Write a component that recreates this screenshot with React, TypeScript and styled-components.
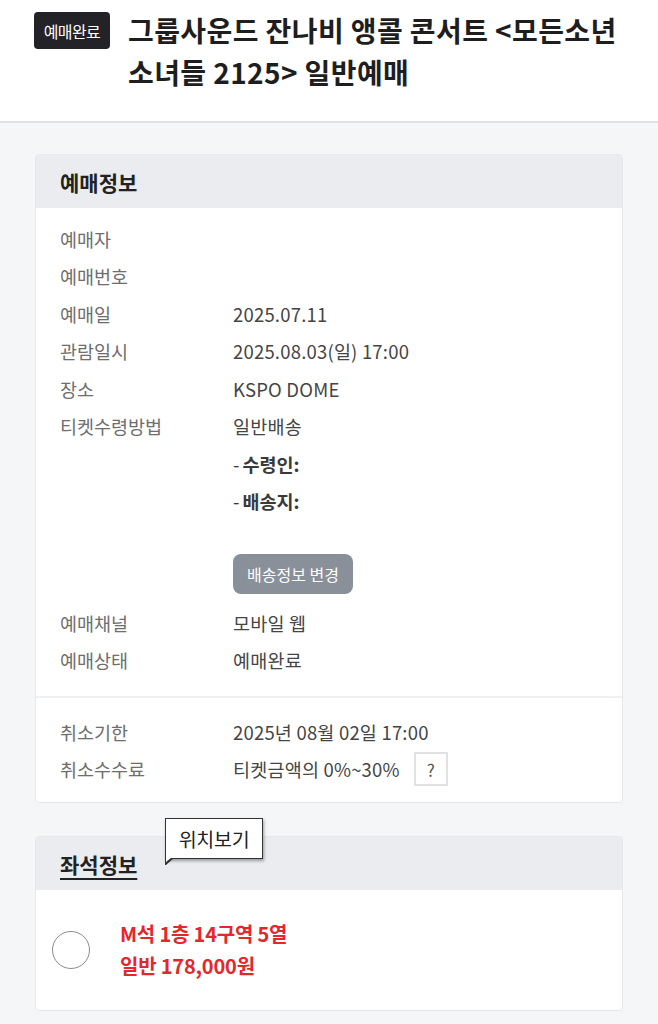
import React from "react";
import styled, { createGlobalStyle } from "styled-components";

const Global = createGlobalStyle`
  html, body { margin: 0; padding: 0; background: #f4f6f8; }
  body { font-family: "Noto Sans CJK KR", "Noto Sans", sans-serif; -webkit-font-smoothing: antialiased; }
  * { box-sizing: border-box; }
`;

const Page = styled.div`
  width: 658px;
  min-height: 1024px;
  background: #f4f6f8;
`;

const Header = styled.header`
  background: #fff;
  height: 123px;
  border-bottom: 2px solid #dfe1e4;
  display: flex;
  align-items: flex-start;
  padding: 12px 20px 0 34px;
  gap: 18px;
`;

const Badge = styled.span`
  flex: none;
  background: #232327;
  color: #fff;
  font-size: 16px;
  border-radius: 4px;
  height: 37px;
  width: 76px;
  display: flex;
  align-items: center;
  justify-content: center;
  letter-spacing: -0.6px;
`;

const Title = styled.h1`
  margin: -3px 0 0;
  font-size: 28px;
  font-weight: 700;
  line-height: 42px;
  color: #1e1e1e;
  letter-spacing: 0.4px;
`;

const Content = styled.main`
  padding: 31px 35px 0;
  display: flex;
  flex-direction: column;
  gap: 33px;
`;

const Card = styled.section`
  background: #fff;
  border: 1px solid #e6e8eb;
  border-radius: 4px;
  position: relative;
`;

const CardHead = styled.div`
  height: 53px;
  background: #ebecf0;
  display: flex;
  align-items: center;
  padding-left: 24px;
`;

const CardTitle = styled.h2<{ $underline?: boolean }>`
  margin: 0;
  font-size: 21px;
  font-weight: 700;
  color: #222;
  text-decoration: ${(p) => (p.$underline ? "underline" : "none")};
  text-underline-offset: 5px;
  text-decoration-thickness: 2px;
`;

const Block = styled.div<{ $pt: number; $pb: number; $divider?: boolean }>`
  padding: ${(p) => p.$pt}px 24px ${(p) => p.$pb}px;
  border-top: ${(p) => (p.$divider ? "2px solid #eef0f2" : "none")};
  display: flex;
  flex-direction: column;
`;

const Row = styled.div`
  display: grid;
  grid-template-columns: 173px 1fr;
  align-items: center;
  min-height: 37.5px;
  font-size: 18.5px;
  letter-spacing: 0;
`;

const Label = styled.span`
  color: #6e6e6e;
`;

const Value = styled.span`
  color: #454545;
  display: flex;
  align-items: center;
  gap: 14px;
  letter-spacing: 0.2px;
`;

const SubLine = styled.div`
  margin-left: 173px;
  min-height: 37.5px;
  display: flex;
  align-items: center;
  font-size: 18.5px;
  font-weight: 700;
  color: #3a3a3a;
`;

const Dash = styled.span`
  font-weight: 400;
  margin-right: 3px;
`;

const ChangeButton = styled.button`
  margin: 34px 0 10px 173px;
  width: 120px;
  height: 40px;
  border: none;
  border-radius: 8px;
  background: #8a9099;
  color: #fff;
  font-family: inherit;
  font-size: 16px;
  letter-spacing: 0;
  padding: 0;
`;

const HelpBox = styled.span`
  width: 34px;
  height: 34px;
  border: 2px solid #e2e2e2;
  display: inline-flex;
  align-items: center;
  justify-content: center;
  color: #555;
  font-size: 17px;
`;

const Tooltip = styled.div`
  position: absolute;
  left: 129px;
  top: -19px;
  background: #fff;
  border: 1px solid #333;
  box-shadow: 1px 2px 3px rgba(0, 0, 0, 0.35);
  height: 41px;
  width: 98px;
  display: flex;
  align-items: center;
  justify-content: center;
  font-size: 19.5px;
  color: #222;
  letter-spacing: -0.3px;
  &::before {
    content: "";
    position: absolute;
    left: -1px;
    bottom: -7px;
    border-left: 1px solid #333;
    width: 0;
    height: 0;
    border-top: 7px solid #333;
    border-right: 8px solid transparent;
  }
  &::after {
    content: "";
    position: absolute;
    left: 0;
    bottom: -4px;
    border-top: 5px solid #fff;
    border-right: 6px solid transparent;
  }
`;

const SeatBody = styled.div`
  display: flex;
  align-items: center;
  padding: 28px 16px 28px;
  gap: 30px;
`;

const Radio = styled.span`
  width: 38px;
  height: 38px;
  border-radius: 50%;
  border: 1.5px solid #8c8c8c;
  flex: none;
`;

const SeatText = styled.div`
  color: #e2282c;
  font-size: 20px;
  font-weight: 700;
  line-height: 32px;
  letter-spacing: -0.2px;
`;

const rows1: [string, string][] = [
  ["예매자", ""],
  ["예매번호", ""],
  ["예매일", "2025.07.11"],
  ["관람일시", "2025.08.03(일) 17:00"],
  ["장소", "KSPO DOME"],
  ["티켓수령방법", "일반배송"],
];

export default function App() {
  return (
    <Page>
      <Global />
      <Header>
        <Badge>예매완료</Badge>
        <Title>그룹사운드 잔나비 앵콜 콘서트 &lt;모든소년 소녀들 2125&gt; 일반예매</Title>
      </Header>
      <Content>
        <Card>
          <CardHead>
            <CardTitle>예매정보</CardTitle>
          </CardHead>
          <Block $pt={12} $pb={17}>
            {rows1.map(([l, v]) => (
              <Row key={l}>
                <Label>{l}</Label>
                <Value>{v}</Value>
              </Row>
            ))}
            <SubLine>
              <Dash>-</Dash>수령인:
            </SubLine>
            <SubLine>
              <Dash>-</Dash>배송지:
            </SubLine>
            <ChangeButton>배송정보 변경</ChangeButton>
            <Row>
              <Label>예매채널</Label>
              <Value>모바일 웹</Value>
            </Row>
            <Row>
              <Label>예매상태</Label>
              <Value>예매완료</Value>
            </Row>
          </Block>
          <Block $pt={15} $pb={14} $divider>
            <Row>
              <Label>취소기한</Label>
              <Value>2025년 08월 02일 17:00</Value>
            </Row>
            <Row>
              <Label>취소수수료</Label>
              <Value>
                티켓금액의 0%~30%
                <HelpBox>?</HelpBox>
              </Value>
            </Row>
          </Block>
        </Card>
        <Card>
          <CardHead>
            <CardTitle $underline>좌석정보</CardTitle>
          </CardHead>
          <Tooltip>위치보기</Tooltip>
          <SeatBody>
            <Radio />
            <SeatText>
              <div>M석 1층 14구역 5열</div>
              <div>일반 178,000원</div>
            </SeatText>
          </SeatBody>
        </Card>
      </Content>
    </Page>
  );
}
